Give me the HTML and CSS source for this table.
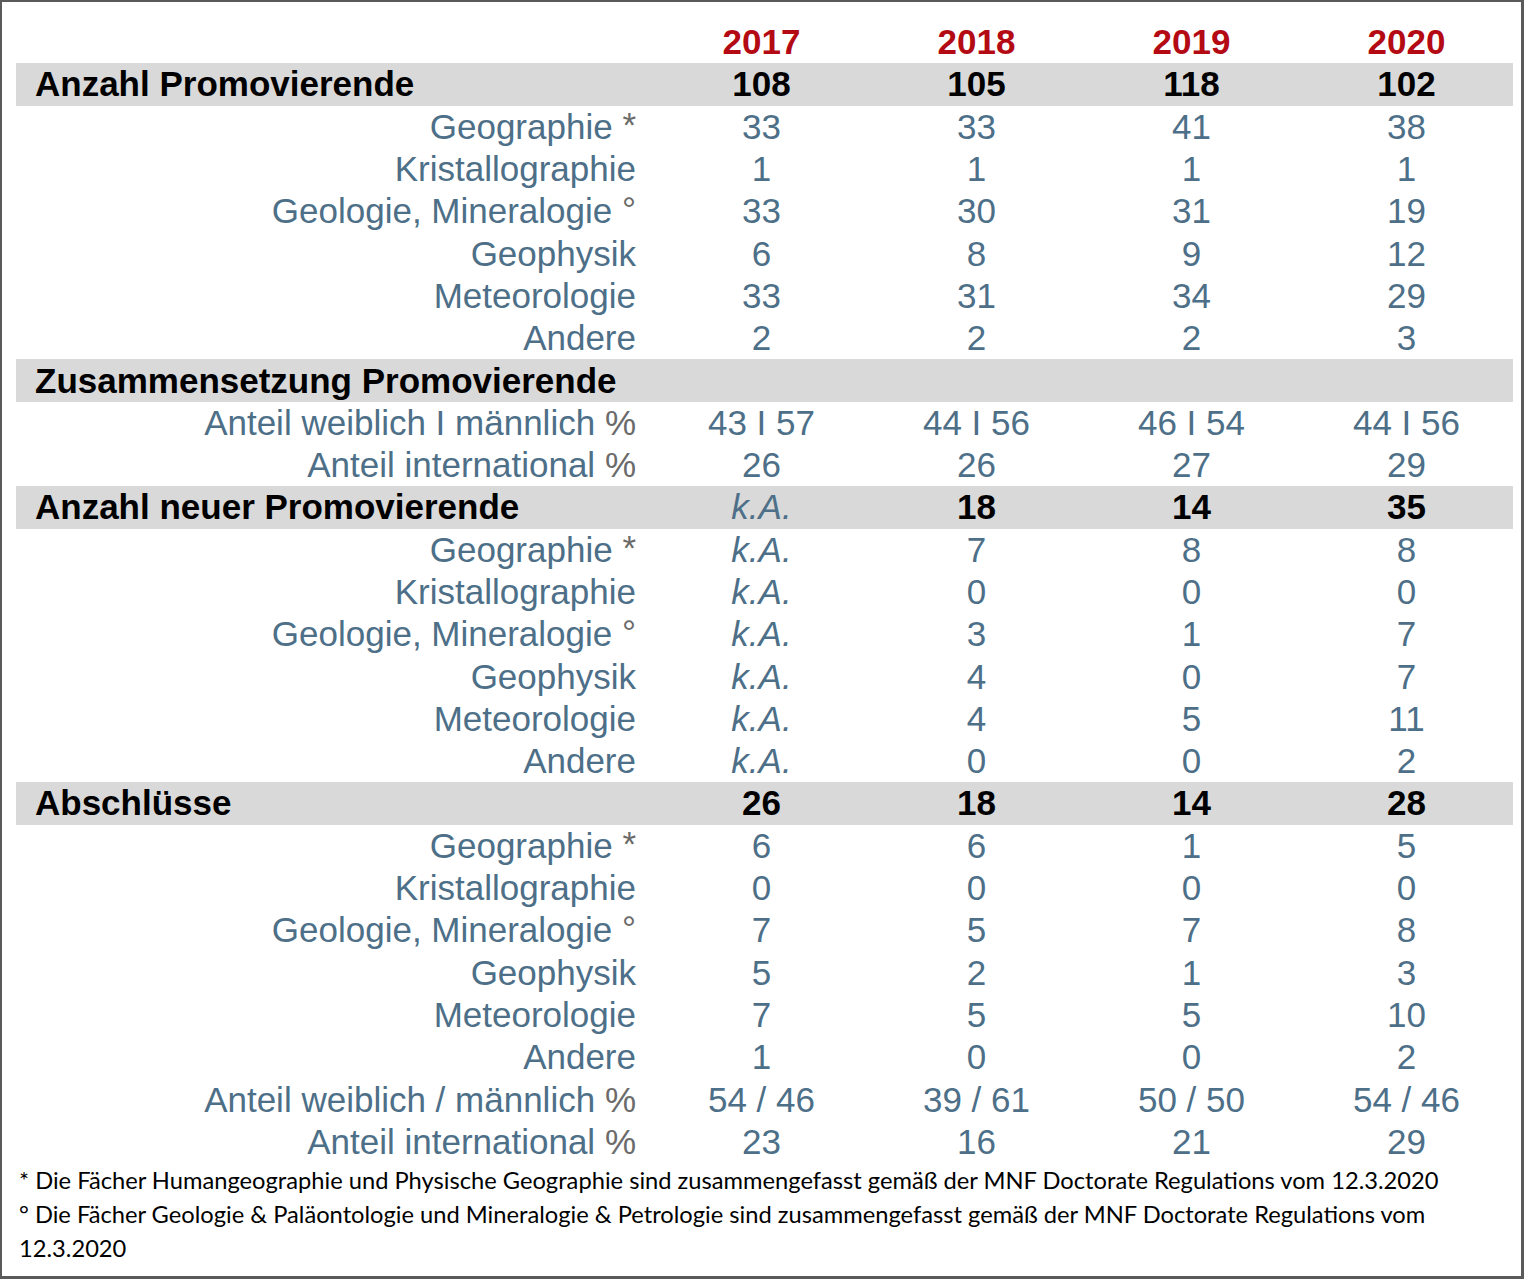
FILE: index.html
```html
<!DOCTYPE html>
<html lang="de">
<head>
<meta charset="utf-8">
<title>Promovierende</title>
<link rel="stylesheet" href="styles.css">
</head>
<body>
<div class="frame">
  <div class="table">
    <div class="row head"><div class="lbl"></div><div class="v">2017</div><div class="v">2018</div><div class="v">2019</div><div class="v">2020</div></div>

    <div class="row band"><div class="lbl">Anzahl Promovierende</div><div class="v">108</div><div class="v">105</div><div class="v">118</div><div class="v">102</div></div>
    <div class="row"><div class="lbl">Geographie <span class="m">*</span></div><div class="v">33</div><div class="v">33</div><div class="v">41</div><div class="v">38</div></div>
    <div class="row"><div class="lbl">Kristallographie</div><div class="v">1</div><div class="v">1</div><div class="v">1</div><div class="v">1</div></div>
    <div class="row"><div class="lbl">Geologie, Mineralogie <span class="m deg">°</span></div><div class="v">33</div><div class="v">30</div><div class="v">31</div><div class="v">19</div></div>
    <div class="row"><div class="lbl">Geophysik</div><div class="v">6</div><div class="v">8</div><div class="v">9</div><div class="v">12</div></div>
    <div class="row"><div class="lbl">Meteorologie</div><div class="v">33</div><div class="v">31</div><div class="v">34</div><div class="v">29</div></div>
    <div class="row"><div class="lbl">Andere</div><div class="v">2</div><div class="v">2</div><div class="v">2</div><div class="v">3</div></div>

    <div class="row band"><div class="lbl">Zusammensetzung Promovierende</div><div class="v"></div><div class="v"></div><div class="v"></div><div class="v"></div></div>
    <div class="row"><div class="lbl">Anteil weiblich I männlich <span class="p">%</span></div><div class="v">43 I 57</div><div class="v">44 I 56</div><div class="v">46 I 54</div><div class="v">44 I 56</div></div>
    <div class="row"><div class="lbl">Anteil international <span class="p">%</span></div><div class="v">26</div><div class="v">26</div><div class="v">27</div><div class="v">29</div></div>

    <div class="row band"><div class="lbl">Anzahl neuer Promovierende</div><div class="v ka">k.A.</div><div class="v">18</div><div class="v">14</div><div class="v">35</div></div>
    <div class="row"><div class="lbl">Geographie <span class="m">*</span></div><div class="v ka">k.A.</div><div class="v">7</div><div class="v">8</div><div class="v">8</div></div>
    <div class="row"><div class="lbl">Kristallographie</div><div class="v ka">k.A.</div><div class="v">0</div><div class="v">0</div><div class="v">0</div></div>
    <div class="row"><div class="lbl">Geologie, Mineralogie <span class="m deg">°</span></div><div class="v ka">k.A.</div><div class="v">3</div><div class="v">1</div><div class="v">7</div></div>
    <div class="row"><div class="lbl">Geophysik</div><div class="v ka">k.A.</div><div class="v">4</div><div class="v">0</div><div class="v">7</div></div>
    <div class="row"><div class="lbl">Meteorologie</div><div class="v ka">k.A.</div><div class="v">4</div><div class="v">5</div><div class="v">11</div></div>
    <div class="row"><div class="lbl">Andere</div><div class="v ka">k.A.</div><div class="v">0</div><div class="v">0</div><div class="v">2</div></div>

    <div class="row band"><div class="lbl">Abschlüsse</div><div class="v">26</div><div class="v">18</div><div class="v">14</div><div class="v">28</div></div>
    <div class="row"><div class="lbl">Geographie <span class="m">*</span></div><div class="v">6</div><div class="v">6</div><div class="v">1</div><div class="v">5</div></div>
    <div class="row"><div class="lbl">Kristallographie</div><div class="v">0</div><div class="v">0</div><div class="v">0</div><div class="v">0</div></div>
    <div class="row"><div class="lbl">Geologie, Mineralogie <span class="m deg">°</span></div><div class="v">7</div><div class="v">5</div><div class="v">7</div><div class="v">8</div></div>
    <div class="row"><div class="lbl">Geophysik</div><div class="v">5</div><div class="v">2</div><div class="v">1</div><div class="v">3</div></div>
    <div class="row"><div class="lbl">Meteorologie</div><div class="v">7</div><div class="v">5</div><div class="v">5</div><div class="v">10</div></div>
    <div class="row"><div class="lbl">Andere</div><div class="v">1</div><div class="v">0</div><div class="v">0</div><div class="v">2</div></div>
    <div class="row"><div class="lbl">Anteil weiblich / männlich <span class="p">%</span></div><div class="v">54 / 46</div><div class="v">39 / 61</div><div class="v">50 / 50</div><div class="v">54 / 46</div></div>
    <div class="row"><div class="lbl">Anteil international <span class="p">%</span></div><div class="v">23</div><div class="v">16</div><div class="v">21</div><div class="v">29</div></div>
  </div>
  <div class="notes">
    <p>* Die Fächer Humangeographie und Physische Geographie sind zusammengefasst gemäß der MNF Doctorate Regulations vom 12.3.2020</p>
    <p>° Die Fächer Geologie &amp; Paläontologie und Mineralogie &amp; Petrologie sind zusammengefasst gemäß der MNF Doctorate Regulations vom 12.3.2020</p>
  </div>
</div>
</body>
</html>
```

FILE: styles.css
```css
html, body {
  margin: 0;
  padding: 0;
  background: #ffffff;
}

.frame {
  box-sizing: border-box;
  width: 1524px;
  height: 1279px;
  border-style: solid;
  border-color: #5a5a5a;
  border-width: 2px 3px 3px 2px;
  padding: 19px 8px 0 14px;
  font-family: "Liberation Sans", Arial, sans-serif;
}

.table {
  display: flex;
  flex-direction: column;
}

.row {
  display: grid;
  grid-template-columns: 638px repeat(4, 215px);
  height: 42.3px;
  align-items: center;
  font-size: 35px;
  line-height: 42px;
  color: #4d6f88;
}

.row .lbl {
  text-align: right;
  padding-right: 18px;
  white-space: nowrap;
}

.row .v {
  text-align: center;
  white-space: nowrap;
}

.head .v {
  color: #b40a14;
  font-weight: bold;
}

.band {
  background: #d9d9d9;
  color: #000000;
  font-weight: bold;
}

.band .lbl {
  text-align: left;
  padding-left: 19px;
  padding-right: 0;
}

.ka {
  font-style: italic;
  font-weight: normal;
  color: #4d6f88;
}

.m {
  color: #6b6b6b;
  position: relative;
  top: -2px;
}

.deg {
  top: -1px;
}

.p {
  color: #6b6b6b;
}

.notes {
  font-family: Lato, "Liberation Sans", sans-serif;
  font-size: 23.7px;
  line-height: 34px;
  color: #000000;
  padding-left: 3px;
}

.notes p {
  margin: 0;
}
```
